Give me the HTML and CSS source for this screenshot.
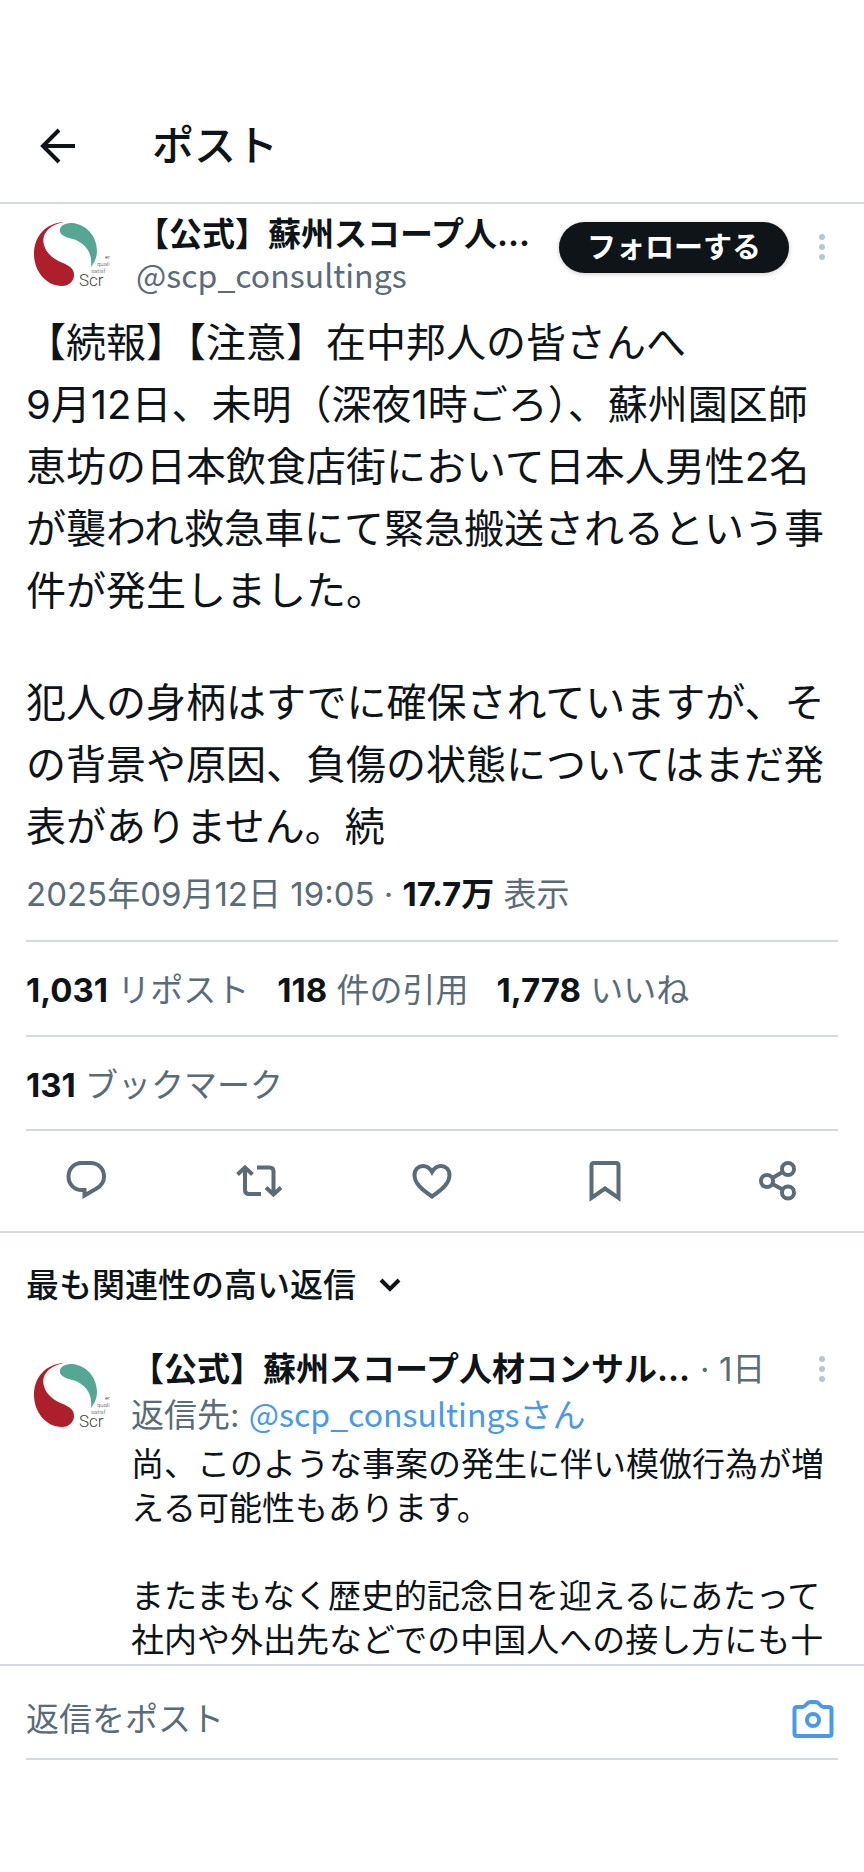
FILE: index.html
```
<!DOCTYPE html>
<html lang="ja">
<head>
<meta charset="UTF-8">
<meta name="viewport" content="width=device-width, initial-scale=1.0">
<title>ポスト</title>
<link rel="stylesheet" href="styles.css">
</head>
<body>
<svg class="defs" aria-hidden="true">
  <symbol id="logo" viewBox="0 0 88 84">
    <path fill="#ad1f2b" d="M38 8C20 9 8 22 8 40c0 17 12 32 28 32 7 0 12-5 12-11 0-7-5-9-11-12-10-4-17-10-19-18-3-10 4-20 20-23z"/>
    <path fill="#55a794" d="M34 15c1-4 6-6 12-6 14 1 25 13 25 28 0 7-3 12-6 16 1-9-1-18-10-24-5-4-10-4-15-6-4-2-7-4-6-8z"/>
  </symbol>
  <symbol id="dots" viewBox="0 0 8 28">
    <circle cx="4" cy="4" r="3"/>
    <circle cx="4" cy="14" r="3"/>
    <circle cx="4" cy="24" r="3"/>
  </symbol>
</svg>

<header class="topbar">
  <button class="icon-btn" aria-label="戻る">
    <svg class="back" viewBox="0 0 36 36"><path d="M35 18H3M19 2L3 18l16 16"/></svg>
  </button>
  <h1>ポスト</h1>
</header>

<main class="thread">
  <article class="post">
    <div class="author">
      <svg class="avatar" viewBox="0 0 88 84">
        <use href="#logo"/>
        <text x="53" y="72" font-size="17">Scr</text>
        <text x="79" y="45" font-size="6">er</text>
        <text x="71" y="52" font-size="6">quali</text>
        <text x="65" y="59" font-size="6">satisf</text>
      </svg>
      <div class="who">
        <strong class="name">【公式】蘇州スコープ人...</strong>
        <a class="handle" href="#">@scp_consultings</a>
      </div>
      <button class="follow">フォローする</button>
      <button class="icon-btn more" aria-label="その他"><svg class="dots"><use href="#dots"/></svg></button>
    </div>

    <div class="text">
      <p>【続報】【注意】在中邦人の皆さんへ<br>9月12日、未明（深夜1時ごろ）、蘇州園区師恵坊の日本飲食店街において日本人男性2名が襲われ救急車にて緊急搬送されるという事件が発生しました。</p>
      <p>犯人の身柄はすでに確保されていますが、その背景や原因、負傷の状態についてはまだ発表がありません。続</p>
    </div>

    <p class="meta">2025年09月12日 19:05 · <b>17.7万</b> 表示</p>
    <div class="stats">
      <a href="#"><b>1,031</b> リポスト</a>
      <a href="#"><b>118</b> 件の引用</a>
      <a href="#"><b>1,778</b> いいね</a>
    </div>
    <div class="stats">
      <a href="#"><b>131</b> ブックマーク</a>
    </div>
  </article>

  <div class="actions">
    <button class="icon-btn" aria-label="返信">
      <svg viewBox="0 0 48 48"><path d="M19.500 6h9C36.500 6 42 12 42 19.500c0 5.500-3 9.500-7.500 12L22.500 38.500V33h-2.500C12 33 6.500 27 6.500 19.500S12 6 19.500 6z"/></svg>
    </button>
    <button class="icon-btn" aria-label="リポスト">
      <svg viewBox="0 0 48 48"><path d="M2.500 17.500L10 10.500l7.500 7M10 11v22c0 2.500 1.500 4 4 4h12M22 10.500h12.500c2.500 0 4 1.500 4 4V37M31 30.500l7.500 7 7.500-7"/></svg>
    </button>
    <button class="icon-btn" aria-label="いいね">
      <svg viewBox="0 0 48 48"><path d="M24 39.500C13 32 6.500 26 6.500 18c0-5.500 4-9 8.500-9 4 0 7 2.500 9 6 2-3.500 5-6 9-6 4.500 0 8.500 3.500 8.500 9 0 8-6.500 14-17.500 21.500z"/></svg>
    </button>
    <button class="icon-btn" aria-label="ブックマーク">
      <svg viewBox="0 0 48 48"><path d="M10.500 41V8.500c0-1.500 1-2.500 2.500-2.500h22c1.500 0 2.500 1 2.500 2.500V41L24 31.500z"/></svg>
    </button>
    <button class="icon-btn" aria-label="共有">
      <svg viewBox="0 0 48 48"><circle cx="13" cy="24" r="6"/><circle cx="34" cy="12" r="6"/><circle cx="34" cy="35.500" r="6"/><path d="M18.500 21l10-6M18.500 27l10 5.500"/></svg>
    </button>
  </div>

  <button class="sort">最も関連性の高い返信 <svg viewBox="0 0 24 16"><path d="M3 3l9 9 9-9"/></svg></button>

  <article class="reply">
    <svg class="avatar" viewBox="0 0 88 84">
      <use href="#logo"/>
      <text x="53" y="72" font-size="17">Scr</text>
      <text x="79" y="45" font-size="6">er</text>
      <text x="71" y="52" font-size="6">quali</text>
      <text x="65" y="59" font-size="6">satisf</text>
    </svg>
    <div class="reply-body">
      <div class="reply-head">
        <strong class="name">【公式】蘇州スコープ人材コンサル...</strong>
        <span class="time">· 1日</span>
        <button class="icon-btn more" aria-label="その他"><svg class="dots"><use href="#dots"/></svg></button>
      </div>
      <p class="reply-to">返信先: <a href="#"><span class="at">@scp_consultings</span>さん</a></p>
      <div class="reply-text">
        <p>尚、このような事案の発生に伴い模倣行為が増える可能性もあります。</p>
        <p>またまもなく歴史的記念日を迎えるにあたって社内や外出先などでの中国人への接し方にも十</p>
      </div>
    </div>
  </article>
</main>

<footer class="composer">
  <div class="field">
    <input type="text" placeholder="返信をポスト" aria-label="返信をポスト">
    <button class="icon-btn" aria-label="写真を追加">
      <svg class="camera" viewBox="0 0 42 40"><path d="M5 8h5.500c3 0 4.500-5 7.500-5h6c3 0 4.500 5 7.500 5H37c1.500 0 2.500 1 2.500 2.500v24c0 1.500-1 2.500-2.500 2.500H5c-1.500 0-2.500-1-2.500-2.500v-24C2.500 9 3.500 8 5 8z"/><circle cx="21" cy="21" r="6"/></svg>
    </button>
  </div>
</footer>
</body>
</html>
```
FILE: styles.css
```
* {
  box-sizing: border-box;
  margin: 0;
  padding: 0;
}
body {
  display: flex;
  flex-direction: column;
  height: 100vh;
  background: #fff;
  color: #0f1419;
  font-family: "Inter", "Noto Sans CJK JP", sans-serif;
  font-size: 33px;
  line-height: 44px;
}
a {
  color: inherit;
  text-decoration: none;
}
button {
  border: 0;
  background: none;
  color: inherit;
  font: inherit;
  cursor: pointer;
}
svg {
  display: block;
  flex: none;
}
.defs {
  position: absolute;
  width: 0;
  height: 0;
}
.icon-btn svg {
  fill: none;
  stroke: currentColor;
  stroke-width: 4;
}

/* top bar */
.topbar {
  display: flex;
  align-items: center;
  gap: 76px;
  padding: 90px 40px 0;
  height: 204px;
  flex: none;
  border-bottom: 2px solid #d3dbe1;
}
.topbar h1 {
  font-size: 42px;
  font-weight: 500;
}
.back {
  width: 36px;
  height: 36px;
}

/* post */
.thread {
  flex: 1;
  min-height: 0;
  overflow: hidden;
}
.post {
  padding: 8px 26px 0;
}
.author {
  display: flex;
  align-items: flex-start;
}
.avatar {
  width: 88px;
  height: 84px;
  margin-top: 2px;
}
.avatar text {
  fill: #444;
  font-family: "Roboto", sans-serif;
  font-weight: 300;
}
.who {
  display: flex;
  flex-direction: column;
  flex: 1;
  min-width: 0;
  padding-left: 22px;
}
.name {
  font-weight: 700;
  white-space: nowrap;
}
.handle {
  color: #5b6b78;
  line-height: 36px;
}
.handle,
.at {
  font-family: "Noto Sans CJK JP", sans-serif;
  font-size: 32px;
}
.follow {
  height: 51px;
  margin-top: 10px;
  padding: 0 28px;
  border-radius: 26px;
  background: #0f1419;
  box-shadow: 0 1px 5px rgba(0, 0, 0, .2);
  color: #fff;
  font-size: 29px;
  font-weight: 700;
}
.more {
  width: 16px;
  margin: 21px 8px 0 25px;
}
.icon-btn .dots {
  width: 8px;
  height: 28px;
  margin: 0 auto;
  fill: #b9c7d3;
  stroke: none;
}
.text {
  margin-top: 14px;
  font-size: 40px;
  line-height: 62px;
}
.text p + p {
  margin-top: 50px;
}
.meta {
  padding: 14px 0 24px;
  color: #5b6b78;
}
b {
  color: #0f1419;
  font-weight: 700;
}
.stats {
  display: flex;
  gap: 28px;
  padding: 26px 0 23px;
  border-top: 2px solid #d3dbe1;
  color: #5b6b78;
}
.stats:last-child {
  padding-bottom: 22px;
  border-bottom: 2px solid #d3dbe1;
}
.actions {
  display: grid;
  grid-template-columns: repeat(5, 1fr);
  justify-items: center;
  align-items: center;
  height: 102px;
  border-bottom: 2px solid #d3dbe1;
  color: #5b6b78;
}
.actions svg {
  width: 48px;
  height: 48px;
}
.sort {
  display: flex;
  align-items: center;
  gap: 22px;
  padding: 30px 26px;
  font-weight: 500;
}
.sort svg {
  width: 24px;
  height: 16px;
  fill: none;
  stroke: currentColor;
  stroke-width: 4;
}

/* replies */
.reply {
  display: flex;
  padding: 10px 26px 0;
}
.reply .avatar {
  margin-top: 8px;
}
.reply-body {
  flex: 1;
  min-width: 0;
  padding-left: 17px;
}
.reply-head {
  display: flex;
  align-items: center;
}
.reply-head .more {
  margin: 0 8px 0 auto;
}
.time {
  margin-left: 10px;
  color: #5b6b78;
}
.reply-to {
  margin-bottom: 4px;
  line-height: 45px;
  color: #5b6b78;
}
.reply-to a {
  color: #4a99e9;
}
.reply-text p + p {
  margin-top: 44px;
}

/* reply box */
.composer {
  flex: none;
  height: 208px;
  padding: 16px 26px 0;
  border-top: 2px solid #d3dbe1;
}
.field {
  display: flex;
  align-items: center;
  height: 78px;
  padding-bottom: 2px;
  border-bottom: 2px solid #d3dbe1;
}
.field input {
  flex: 1;
  min-width: 0;
  border: 0;
  outline: 0;
  background: none;
  font: inherit;
}
.field input::placeholder {
  color: #5b6b78;
  opacity: 1;
}
.field .icon-btn {
  color: #4a99e9;
  padding: 0 4px;
}
.camera {
  width: 42px;
  height: 40px;
}
```
